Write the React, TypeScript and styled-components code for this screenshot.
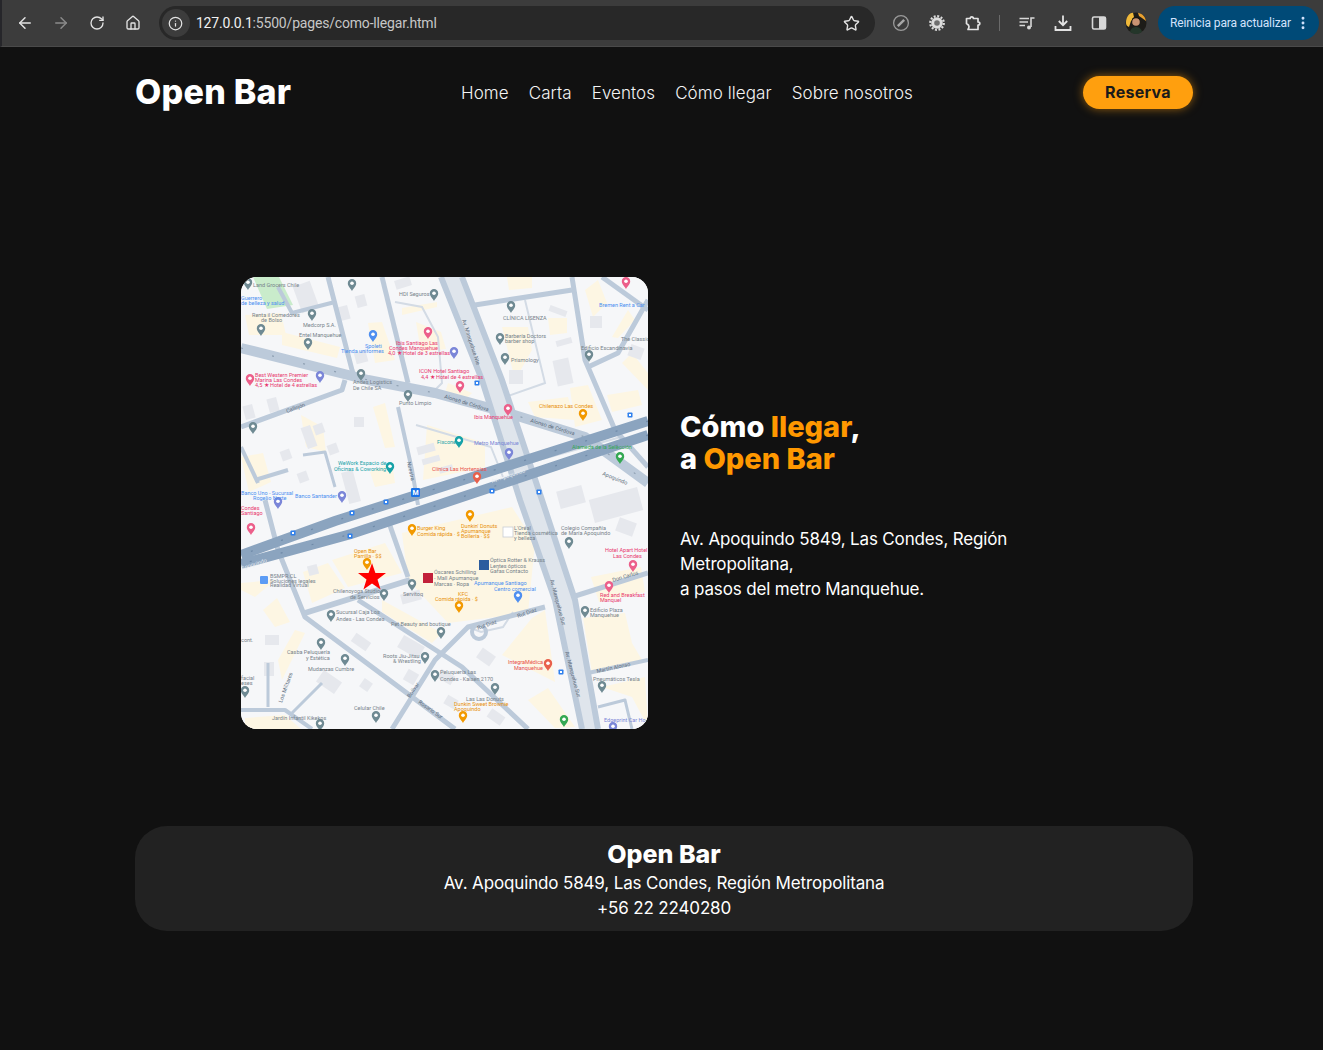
import React from "react";
import styled, { createGlobalStyle } from "styled-components";
import { ArrowLeft, ArrowRight, RotateCw, House, Info, Star, EllipsisVertical } from "lucide-react";

const GlobalStyle = createGlobalStyle`
  html, body {
    margin: 0;
    padding: 0;
    background: #111111;
  }
  body {
    font-family: Inter, "Open Sans", sans-serif;
    color: #ffffff;
  }
`;

const Page = styled.div`
  width: 1323px;
  min-height: 1050px;
  background: #111111;
  overflow: hidden;
`;

/* Browser toolbar */
const Toolbar = styled.div`
  height: 47px;
  box-sizing: border-box;
  display: flex;
  align-items: center;
  background: #3c3c3c;
  border-left: 2px solid #26262a;
  border-bottom: 1px solid #4a4a4a;
  padding: 0 4px 0 14px;
`;

const ToolIcon = styled.span<{ $dim?: boolean; $gap?: number }>`
  width: 18px;
  height: 18px;
  display: flex;
  align-items: center;
  justify-content: center;
  margin-right: ${(p) => p.$gap ?? 18}px;
  color: ${(p) => (p.$dim ? "#8a8a8a" : "#e3e3e3")};
`;

const AddressBar = styled.div`
  width: 718px;
  height: 34px;
  margin-right: 17px;
  margin-left: -1px;
  box-sizing: border-box;
  display: flex;
  align-items: center;
  background: #282828;
  border-radius: 17px;
  padding: 0 15px 0 3px;
`;

const InfoBadge = styled.span`
  width: 28px;
  height: 28px;
  flex: none;
  display: flex;
  align-items: center;
  justify-content: center;
  background: #3c3c3c;
  border-radius: 50%;
  color: #e3e3e3;
  margin-right: 6px;
`;

const Url = styled.span`
  flex: 1;
  font-family: Roboto, sans-serif;
  font-size: 14px;
  letter-spacing: -0.18px;
  color: #c7c7c7;
`;

const UrlHost = styled.span`
  color: #f1f1f1;
`;

const ToolDivider = styled.span`
  width: 1px;
  height: 16px;
  background: #6a6a6a;
  margin-right: 18px;
`;

const Avatar = styled.span`
  width: 22px;
  height: 22px;
  display: flex;
  margin-right: 11px;
`;

const UpdatePill = styled.div`
  width: 161px;
  height: 34px;
  flex: none;
  box-sizing: border-box;
  display: flex;
  align-items: center;
  justify-content: space-between;
  background: #004a77;
  border-radius: 17px;
  padding: 0 8px 0 12px;
  font-family: Roboto, sans-serif;
  font-size: 12px;
  letter-spacing: -0.12px;
  color: #d3e3fd;
`;

/* Site */
const Shell = styled.div`
  width: 1058px;
  margin-left: 135px;
`;

const SiteHeader = styled.header`
  height: 91px;
  display: flex;
  align-items: center;
  justify-content: space-between;
`;

const Logo = styled.div`
  width: 156px;
  padding-bottom: 2px;
  font-size: 34px;
  font-weight: 800;
  letter-spacing: 0.25px;
  white-space: nowrap;
`;

const Nav = styled.nav`
  display: flex;
  gap: 20px;
  padding-top: 1px;
`;

const NavLink = styled.a`
  font-size: 17px;
  font-weight: 300;
  letter-spacing: 0.08px;
  color: #f4f4f4;
`;

const ReserveButton = styled.button`
  width: 110px;
  height: 33px;
  padding: 0 0 2px;
  border: none;
  border-radius: 17px;
  background: #ff9f0e;
  box-shadow: 0 0 10px rgba(255, 159, 14, 0.55);
  font-family: inherit;
  font-size: 16px;
  font-weight: 700;
  letter-spacing: 0.3px;
  color: #1a1a1a;
`;

const Hero = styled.main`
  display: flex;
  align-items: center;
  gap: 32px;
  padding: 139px 0 97px 106px;
`;

const MapFrame = styled.div`
  width: 407px;
  height: 452px;
  flex: none;
  border-radius: 16px;
  overflow: hidden;
  background: #f6f7f9;
`;

const MapSvg = styled.svg`
  display: block;
  width: 407px;
  height: 452px;
  font-family: Roboto, sans-serif;
`;

const toneColors: Record<string, string> = {
  grey: "#76828a",
  pink: "#e8386e",
  blue: "#4a8ef0",
  violet: "#7a85d6",
  orange: "#e8900c",
  teal: "#17a2a8",
  green: "#34a853",
  red: "#e8504a",
  road: "#5f6f80",
  white: "#e9eef4",
};

const MapLabel = styled.text<{ $tone: string }>`
  font-size: 5.5px;
  fill: ${(p) => toneColors[p.$tone]};
`;

const MetroLetter = styled.text`
  font-size: 7px;
  font-weight: 700;
  fill: #ffffff;
  text-anchor: middle;
`;

const HeroText = styled.section`
  width: 360px;
  margin-top: 7px;
`;

const HeroTitle = styled.h1`
  margin: 0 0 52px;
  font-size: 29px;
  line-height: 32px;
  font-weight: 800;
  letter-spacing: 0;
`;

const Accent = styled.span`
  color: #ff9800;
`;

const HeroBody = styled.p`
  margin: 0;
  font-size: 17px;
  line-height: 25px;
  font-weight: 400;
  letter-spacing: -0.15px;
  color: #ffffff;
`;

const SiteFooter = styled.footer`
  height: 105px;
  box-sizing: border-box;
  padding-top: 12px;
  background: #222222;
  border-radius: 32px;
  text-align: center;
`;

const FooterTitle = styled.div`
  font-size: 25px;
  line-height: 33px;
  font-weight: 800;
  letter-spacing: 0;
`;

const FooterLine = styled.div`
  font-size: 17px;
  line-height: 25px;
  letter-spacing: -0.15px;
`;

/* Map data, in map pixels */
const buildings: string[] = [
  "161,256 271,230 294,266 287,336 207,346 167,303",
  "186,148 244,166 244,190 182,203",
  "41,55 99,70 96,81 41,68",
  "4,38 40,36 45,58 8,58",
  "161,31 196,25 196,30 161,38",
  "127,46 141,45 154,83 134,86",
  "175,45 200,55 205,72 180,75",
  "207,106 231,116 224,123 204,116",
  "287,125 327,120 334,143 294,140",
  "329,111 347,108 361,143 334,150",
  "366,118 397,113 401,128 371,135",
  "344,13 357,3 366,26 352,40",
  "371,60 387,33 394,43 377,61",
  "381,86 391,76 407,96 407,113",
  "261,50 287,50 291,73 274,103",
  "266,0 291,0 291,11 268,13",
  "307,41 326,41 326,56 309,58",
  "132,130 144,126 154,170 144,171",
  "129,195 151,185 154,206 134,210",
  "91,283 144,266 161,296 107,310",
  "62,295 87,286 104,311 71,326",
  "0,306 34,303 14,320 0,313",
  "22,333 36,321 49,345 34,350",
  "37,383 54,353 64,356 41,403",
  "141,323 201,356 191,366 141,335",
  "261,378 291,341 304,333 314,405",
  "287,423 307,411 334,450 314,451",
  "342,341 384,336 391,366 401,383 351,396",
  "361,410 404,400 407,450 391,420",
  "4,441 44,438 60,452 4,452",
  "0,180 22,176 30,205 8,215",
  "60,138 82,150 85,175 65,170",
  "350,300 400,290 404,315 358,325",
];

const blocks: [number, number, number, number, number][] = [
  [162, 6, 16, 9, -17],
  [65, 20, 18, 28, -20],
  [103, 36, 10, 14, -15],
  [120, 24, 10, 12, -15],
  [120, 80, 12, 12, -15],
  [317, 34, 18, 6, 20],
  [275, 100, 14, 14, 0],
  [323, 65, 16, 6, -15],
  [355, 45, 12, 12, 0],
  [322, 95, 16, 26, -12],
  [395, 75, 14, 12, 20],
  [8, 135, 10, 14, -15],
  [32, 128, 10, 14, -15],
  [68, 160, 10, 22, -20],
  [78, 152, 10, 10, -20],
  [92, 172, 10, 10, -20],
  [62, 200, 10, 10, -20],
  [45, 178, 10, 10, -20],
  [118, 145, 10, 10, 0],
  [185, 172, 18, 8, -15],
  [190, 183, 18, 6, -15],
  [205, 192, 14, 6, -15],
  [110, 210, 12, 32, -15],
  [330, 220, 26, 18, -15],
  [375, 228, 50, 24, -15],
  [385, 250, 18, 14, 20],
  [72, 293, 10, 10, -15],
  [170, 320, 20, 10, -15],
  [170, 370, 24, 14, 30],
  [120, 365, 18, 10, 35],
  [88, 405, 22, 14, 35],
  [125, 408, 10, 10, 35],
  [170, 400, 12, 12, 30],
  [205, 400, 16, 10, 30],
  [245, 380, 16, 12, 35],
  [255, 440, 16, 10, 35],
  [210, 425, 12, 10, 30],
  [31, 363, 14, 10, 0],
  [28, 392, 10, 14, 0],
];

const majorRoads: string[] = ["407,144 94,244 0,278", "407,158 110,257 0,287"];

const roads: [string, number][] = [
  ["0,71 127,103 194,116 267,136 344,160 407,206", 10],
  ["87,0 111,93 114,103", 5],
  ["141,0 167,106", 5],
  ["37,10 51,36 94,25", 4],
  ["234,28 331,13", 5],
  ["331,0 344,83 374,153", 5],
  ["347,90 377,76 407,23", 5],
  ["361,0 407,33", 5],
  ["0,150 101,113 104,103", 5],
  ["157,130 171,193 177,228", 4],
  ["147,243 167,300", 5],
  ["64,336 169,303", 6],
  ["24,223 37,273 64,340 214,452", 5],
  ["117,323 221,390 287,452", 5],
  ["304,330 227,350 194,383 151,452", 5],
  ["331,320 407,296", 5],
  ["347,396 407,383", 4],
  ["0,433 44,433 71,452", 4],
  ["357,430 384,423 391,452", 3],
  ["27,386 27,430", 3],
  ["81,406 51,436", 3],
  ["0,170 17,206", 4],
  ["14,203 47,193", 4],
  ["62,178 84,175 94,210", 3],
  ["374,153 407,190", 5],
];

const thinRoads: string[] = [
  "154,25 181,30 197,60 201,106 194,113",
  "284,23 304,106 264,120",
  "227,350 240,355 262,350 272,335",
  "175,148 250,170 262,200",
  "130,230 380,160",
];

const pins: [number, number, string][] = [
  [7, 7, "#6f8a93"], [111, 8, "#6f8a93"], [193, 18, "#6f8a93"], [71, 38, "#6f8a93"],
  [20, 53, "#6f8a93"], [67, 67, "#6f8a93"], [270, 30, "#6f8a93"], [259, 62, "#6f8a93"],
  [264, 82, "#6f8a93"], [348, 79, "#6f8a93"], [120, 98, "#6f8a93"], [167, 119, "#6f8a93"],
  [12, 151, "#6f8a93"], [328, 266, "#6f8a93"], [143, 318, "#6f8a93"], [171, 308, "#6f8a93"],
  [90, 339, "#6f8a93"], [200, 356, "#6f8a93"], [344, 335, "#6f8a93"], [80, 367, "#6f8a93"],
  [104, 383, "#6f8a93"], [184, 381, "#6f8a93"], [194, 399, "#6f8a93"], [254, 412, "#6f8a93"],
  [361, 410, "#6f8a93"], [135, 440, "#6f8a93"], [79, 448, "#6f8a93"], [4, 415, "#6f8a93"],
  [385, 6, "#ec5f8a"], [187, 56, "#ec5f8a"], [9, 103, "#ec5f8a"], [219, 110, "#ec5f8a"],
  [267, 133, "#ec5f8a"], [392, 289, "#ec5f8a"], [368, 310, "#ec5f8a"], [10, 252, "#ec5f8a"],
  [213, 76, "#7b86d8"], [79, 100, "#7b86d8"], [268, 177, "#7b86d8"], [101, 220, "#7b86d8"],
  [37, 226, "#7b86d8"], [372, 451, "#7b86d8"], [132, 59, "#4f8ff0"], [277, 320, "#4f8ff0"],
  [342, 138, "#f29900"], [229, 239, "#f29900"], [171, 253, "#f29900"], [126, 287, "#f29900"],
  [218, 330, "#f29900"], [222, 440, "#f29900"], [218, 165, "#17a2a8"], [149, 191, "#17a2a8"],
  [379, 181, "#34a853"], [323, 444, "#34a853"], [236, 201, "#e8604c"], [307, 388, "#e8604c"],
];

const transit: [number, number][] = [
  [236, 106], [389, 138], [251, 214], [298, 215], [145, 225], [52, 256], [109, 259], [320, 395], [111, 236],
];

const labels: [number, number, string, string][] = [
  [12, 10, "Land Grocers Chile", "grey"], [158, 19, "HDI Seguros", "grey"], [11, 40, "Renta il Comedores", "grey"],
  [20, 45, "de Bolso", "grey"], [62, 50, "Medcorp S.A.", "grey"], [58, 60, "Entel Manquehue", "grey"],
  [262, 43, "CLÍNICA LISENZA", "grey"], [264, 61, "Barbería Doctors", "grey"], [264, 66, "barber shop", "grey"],
  [270, 85, "Prismology", "grey"], [340, 73, "Edificio Escandinavia", "grey"], [380, 64, "The Classic", "grey"],
  [358, 30, "Bremen Rent a Car", "blue"], [0, 23, "Guerrero", "blue"], [0, 28, "de belleza y salud", "blue"],
  [124, 71, "Spoleti", "blue"], [100, 76, "Tienda uniformes", "blue"], [155, 68, "Ibis Santiago Las", "pink"],
  [148, 73, "Condes Manquehue", "pink"], [147, 78, "4,0 ★ Hotel de 3 estrellas", "pink"], [178, 96, "ICON Hotel Santiago", "pink"],
  [180, 102, "4,4 ★ Hotel de 4 estrellas", "pink"], [14, 100, "Best Western Premier", "pink"], [14, 105, "Marina Las Condes", "pink"],
  [14, 110, "4,5 ★ Hotel de 4 estrellas", "pink"], [233, 142, "Ibis Manquehue", "pink"], [158, 128, "Punto Limpio", "grey"],
  [112, 107, "Andes Logistics", "grey"], [112, 113, "De Chile SA", "grey"], [298, 131, "Chilenazo Las Condes", "orange"],
  [196, 167, "Fixcone", "teal"], [233, 168, "Metro Manquehue", "violet"], [331, 172, "Alameda de la Selección", "green"],
  [97, 188, "WeWork Espacio de", "teal"], [93, 194, "Oficinas & Coworking", "teal"], [191, 194, "Clínica Las Hortensias", "red"],
  [54, 221, "Banco Santander", "blue"], [0, 218, "Banco Uno - Sucursal", "blue"], [12, 223, "Rogelio Norte", "blue"],
  [113, 276, "Open Bar", "orange"], [113, 281, "Parrilla · $$", "orange"], [176, 253, "Burger King", "orange"],
  [176, 259, "Comida rápida · $", "orange"], [220, 251, "Dunkin' Donuts", "orange"], [220, 256, "Apumanque", "orange"],
  [220, 261, "Bollería · $$", "orange"], [273, 253, "L'Oréal", "grey"], [273, 258, "Tienda cosmética", "grey"],
  [273, 263, "y belleza", "grey"], [320, 253, "Colegio Compañía", "grey"], [320, 258, "de María Apoquindo", "grey"],
  [364, 275, "Hotel Apart Hotel", "pink"], [372, 281, "Las Condes", "pink"], [249, 285, "Óptica Rotter & Krauss", "grey"],
  [249, 291, "Lentes ópticos", "grey"], [249, 296, "Gafas Contacto", "grey"], [193, 297, "Óscares Schilling", "grey"],
  [193, 303, "- Mall Apumanque", "grey"], [193, 309, "Marcas · Ropa", "grey"], [233, 308, "Apumanque Santiago", "blue"],
  [253, 314, "Centro comercial", "blue"], [29, 301, "BSMPR.CL", "grey"], [29, 306, "Soluciones legales", "grey"],
  [29, 310, "Realidad Virtual", "grey"], [92, 316, "Chilenoyoga Studio", "grey"], [109, 322, "de Servicios", "grey"],
  [162, 319, "Servitoq", "grey"], [217, 319, "KFC", "orange"], [194, 324, "Comida rápida · $", "orange"],
  [95, 337, "Sucursal Caja Los", "grey"], [95, 344, "Andes - Las Condes", "grey"], [150, 349, "Pet Beauty and boutique", "grey"],
  [349, 335, "Edificio Plaza", "grey"], [349, 340, "Manquehue", "grey"], [359, 320, "Red and Breakfast", "pink"],
  [359, 325, "Manquel", "pink"], [46, 377, "Casba Peluquería", "grey"], [65, 383, "y Estética", "grey"],
  [67, 394, "Mudanzas Cumbre", "grey"], [142, 381, "Roots Jiu-Jitsu", "grey"], [152, 386, "& Wrestling", "grey"],
  [199, 397, "Peluquería Las", "grey"], [199, 404, "Condes - Kaisen 2170", "grey"], [267, 387, "IntegraMédica", "red"],
  [273, 393, "Manquehue", "red"], [352, 404, "Pneumáticos Tesla", "grey"], [113, 433, "Celular Chile", "grey"],
  [31, 443, "Jardín Infantil Kikekos", "grey"], [225, 424, "Las Las Donuts", "grey"], [213, 429, "Dunkin Sweet Brownie", "orange"],
  [213, 434, "Apoquindo", "orange"], [363, 445, "Edgeprint Car Ho", "violet"], [0, 365, "cont.", "grey"],
  [0, 403, "facial", "grey"], [0, 408, "eses", "grey"], [0, 233, "Condes", "pink"], [0, 238, "Santiago", "pink"],
];

const roadLabels: [number, number, number, string, string][] = [
  [203, 121, 17, "Alonso de Córdova", "road"], [289, 145, 17, "Alonso de Córdova", "road"],
  [251, 206, -18, "Av. Apoquindo", "white"], [1, 293, -18, "Apoquindo", "white"],
  [221, 43, 72, "Av. Manquehue Nte", "road"], [46, 136, -20, "Callejón", "road"],
  [166, 185, 78, "Nuestra", "road"], [361, 198, 22, "Apoquindo", "road"],
  [237, 353, -20, "Rut Diaz", "road"], [277, 341, -20, "Rut Diaz", "road"],
  [309, 303, 75, "Av. Manquehue Sur", "road"], [324, 375, 75, "Av. Manquehue Sur", "road"],
  [372, 305, -17, "Don Carlos", "road"], [356, 396, -12, "Martín Alonso", "road"],
  [41, 426, -70, "Los Militares", "road"], [177, 426, 35, "Rosario Sur", "road"],
  [169, 421, -55, "Bolívar", "road"],
];

const StreetMap: React.FC = () => (
  <MapSvg viewBox="0 0 407 452" role="img" aria-label="Mapa">
    <rect width="407" height="452" fill="#f6f7f9" />
    <polygon points="12,0 38,0 52,28 26,32" fill="#c9eccb" />
    {buildings.map((points, i) => (
      <polygon key={i} points={points} fill="#fdf6e3" />
    ))}
    {blocks.map(([x, y, w, h, a], i) => (
      <rect
        key={i}
        x={x - w / 2}
        y={y - h / 2}
        width={w}
        height={h}
        fill="#e6e8ed"
        transform={`rotate(${a} ${x} ${y})`}
      />
    ))}
    {thinRoads.map((points, i) => (
      <polyline key={i} points={points} fill="none" stroke="#d3dbe5" strokeWidth="2" />
    ))}
    {roads.map(([points, width], i) => (
      <polyline key={i} points={points} fill="none" stroke="#bccada" strokeWidth={width} strokeLinejoin="round" />
    ))}
    {roads.slice(0, 1).map(([points], i) => (
      <polyline key={i} points={points} fill="none" stroke="#8fa0b2" strokeWidth="1.2" strokeDasharray="2 30" />
    ))}
    <polygon points="200,0 221,0 261,103 301,223 334,323 357,452 341,452 314,323 279,223 241,103" fill="#dfe5ec" />
    <polyline points="200,0 241,103 279,223 314,323 341,452" fill="none" stroke="#bccada" strokeWidth="6" />
    <polyline points="221,0 261,103 301,223 334,323 357,452" fill="none" stroke="#bccada" strokeWidth="6" />
    <circle cx="238" cy="355" r="7" fill="none" stroke="#bccada" strokeWidth="4" />
    {majorRoads.map((points, i) => (
      <polyline key={i} points={points} fill="none" stroke="#8ba4bf" strokeWidth="10" />
    ))}
    {majorRoads.map((points, i) => (
      <polyline key={i} points={points} fill="none" stroke="#6f8aa8" strokeWidth="1.2" strokeDasharray="2 30" />
    ))}
    {pins.map(([x, y, color], i) => (
      <g key={i} transform={`translate(${x} ${y})`}>
        <path d="M0 6C-1 3.6-4.2 1.6-4.2-1.8A4.2 4.2 0 0 1 4.2-1.8C4.2 1.6 1 3.6 0 6Z" fill={color} />
        <circle cy="-1.8" r="1.8" fill="#ffffff" />
      </g>
    ))}
    {transit.map(([x, y], i) => (
      <g key={i}>
        <rect x={x - 2.5} y={y - 2.5} width="5" height="5" rx="0.8" fill="#2f80ed" />
        <rect x={x - 1} y={y - 1} width="2" height="2" fill="#ffffff" />
      </g>
    ))}
    <rect x="170" y="211" width="9" height="9" rx="1.2" fill="#1a73e8" />
    <MetroLetter x="174.5" y="218.2">M</MetroLetter>
    <rect x="19" y="299" width="8" height="8" rx="1" fill="#5c9cf5" />
    <rect x="182" y="296" width="10" height="10" fill="#c2213b" />
    <rect x="238" y="283" width="10" height="10" fill="#2b5c9e" />
    <rect x="262" y="250" width="10" height="10" fill="#ffffff" stroke="#c9ced4" strokeWidth="0.8" />
    {labels.map(([x, y, text, tone], i) => (
      <MapLabel key={i} x={x} y={y} $tone={tone}>
        {text}
      </MapLabel>
    ))}
    {roadLabels.map(([x, y, angle, text, tone], i) => (
      <MapLabel key={i} x={x} y={y} $tone={tone} transform={`rotate(${angle} ${x} ${y})`}>
        {text}
      </MapLabel>
    ))}
    <polygon
      points="131,286 134.4,296 145,296 136.5,302.4 139.6,312.6 131,306.4 122.4,312.6 125.5,302.4 117,296 127.6,296"
      fill="#ff0000"
    />
  </MapSvg>
);

export default function App() {
  return (
    <Page>
      <GlobalStyle />
      <Toolbar>
        <ToolIcon><ArrowLeft size={18} strokeWidth={2} /></ToolIcon>
        <ToolIcon $dim><ArrowRight size={18} strokeWidth={2} /></ToolIcon>
        <ToolIcon><RotateCw size={16} strokeWidth={2} /></ToolIcon>
        <ToolIcon $gap={18}><House size={16} strokeWidth={2} /></ToolIcon>
        <AddressBar>
          <InfoBadge><Info size={15} strokeWidth={2} /></InfoBadge>
          <Url>
            <UrlHost>127.0.0.1</UrlHost>:5500/pages/como-llegar.html
          </Url>
          <Star size={17} strokeWidth={2} color="#e3e3e3" />
        </AddressBar>
        <ToolIcon>
          <svg width="18" height="18" viewBox="0 0 18 18" fill="none">
            <circle cx="9" cy="9" r="7.4" stroke="#9a9a9a" strokeWidth="1.3" />
            <path d="M5.8 12.2L12.2 5.8" stroke="#a8a8a8" strokeWidth="2.4" />
          </svg>
        </ToolIcon>
        <ToolIcon>
          <svg width="18" height="18" viewBox="0 0 18 18">
            <circle cx="9" cy="9" r="5.8" fill="#dcdcdc" />
            <circle cx="9" cy="9" r="6.8" fill="none" stroke="#dcdcdc" strokeWidth="2.2" strokeDasharray="2 1.56" />
            <circle cx="9" cy="9" r="2.8" fill="#6e6e6e" />
          </svg>
        </ToolIcon>
        <ToolIcon $gap={17}>
          <svg width="18" height="18" viewBox="0 0 18 18" fill="none" stroke="#e3e3e3" strokeWidth="1.7" strokeLinejoin="round">
            <path d="M2.5 4.5H6.2C6.2 2.2 9.4 2.2 9.4 4.5H14V8C16.4 8 16.4 11 14 11V15.5H4C4 15.5 5 13.8 5 12.5 5 11 2.5 9.5 2.5 9.5Z" />
          </svg>
        </ToolIcon>
        <ToolDivider />
        <ToolIcon>
          <svg width="18" height="18" viewBox="0 0 18 18" fill="none" stroke="#d8d8d8" strokeWidth="1.6">
            <path d="M1.5 4.5H11M1.5 8H10M1.5 11.5H7" />
            <path d="M13 13V4H16.5" />
            <circle cx="11" cy="13.5" r="2" fill="#d8d8d8" stroke="none" />
          </svg>
        </ToolIcon>
        <ToolIcon>
          <svg width="18" height="18" viewBox="0 0 18 18" fill="none" stroke="#e3e3e3" strokeWidth="1.8">
            <path d="M9 1.5V11" />
            <path d="M4.8 7L9 11.2 13.2 7" />
            <path d="M1.5 12V16H16.5V12" />
          </svg>
        </ToolIcon>
        <ToolIcon $gap={17}>
          <svg width="16" height="16" viewBox="0 0 16 16">
            <rect x="1.5" y="2" width="13" height="12" rx="1.5" fill="none" stroke="#d8d8d8" strokeWidth="1.6" />
            <rect x="8" y="2" width="6.5" height="12" fill="#d8d8d8" />
          </svg>
        </ToolIcon>
        <Avatar>
          <svg width="22" height="22" viewBox="0 0 22 22">
            <circle cx="11" cy="11" r="10.5" fill="#1d1c18" />
            <path d="M1 11C1 5 4 1 8 .8L9 5 6 9 4 15C2 14 1 13 1 11Z" fill="#f0b93a" />
            <path d="M13 .8C17 1.5 20.5 5 21 9L17 6 14 4Z" fill="#e8a030" />
            <path d="M7 7C8 4.5 14 4.5 15 7L15 8H7Z" fill="#15130f" />
            <circle cx="11" cy="10" r="3.8" fill="#c99372" />
            <path d="M5 20C6 15.5 9 15 11 15S16 15.5 17 20A10.5 10.5 0 0 1 5 20Z" fill="#24362a" />
          </svg>
        </Avatar>
        <UpdatePill>
          Reinicia para actualizar
          <EllipsisVertical size={16} strokeWidth={2.4} color="#d3e3fd" />
        </UpdatePill>
      </Toolbar>
      <Shell>
        <SiteHeader>
          <Logo>Open Bar</Logo>
          <Nav>
            <NavLink>Home</NavLink>
            <NavLink>Carta</NavLink>
            <NavLink>Eventos</NavLink>
            <NavLink>Cómo llegar</NavLink>
            <NavLink>Sobre nosotros</NavLink>
          </Nav>
          <ReserveButton>Reserva</ReserveButton>
        </SiteHeader>
        <Hero>
          <MapFrame>
            <StreetMap />
          </MapFrame>
          <HeroText>
            <HeroTitle>
              Cómo <Accent>llegar</Accent>,
              <br />a <Accent>Open Bar</Accent>
            </HeroTitle>
            <HeroBody>
              Av. Apoquindo 5849, Las Condes, Región Metropolitana,
              <br />a pasos del metro Manquehue.
            </HeroBody>
          </HeroText>
        </Hero>
        <SiteFooter>
          <FooterTitle>Open Bar</FooterTitle>
          <FooterLine>Av. Apoquindo 5849, Las Condes, Región Metropolitana</FooterLine>
          <FooterLine>+56 22 2240280</FooterLine>
        </SiteFooter>
      </Shell>
    </Page>
  );
}
